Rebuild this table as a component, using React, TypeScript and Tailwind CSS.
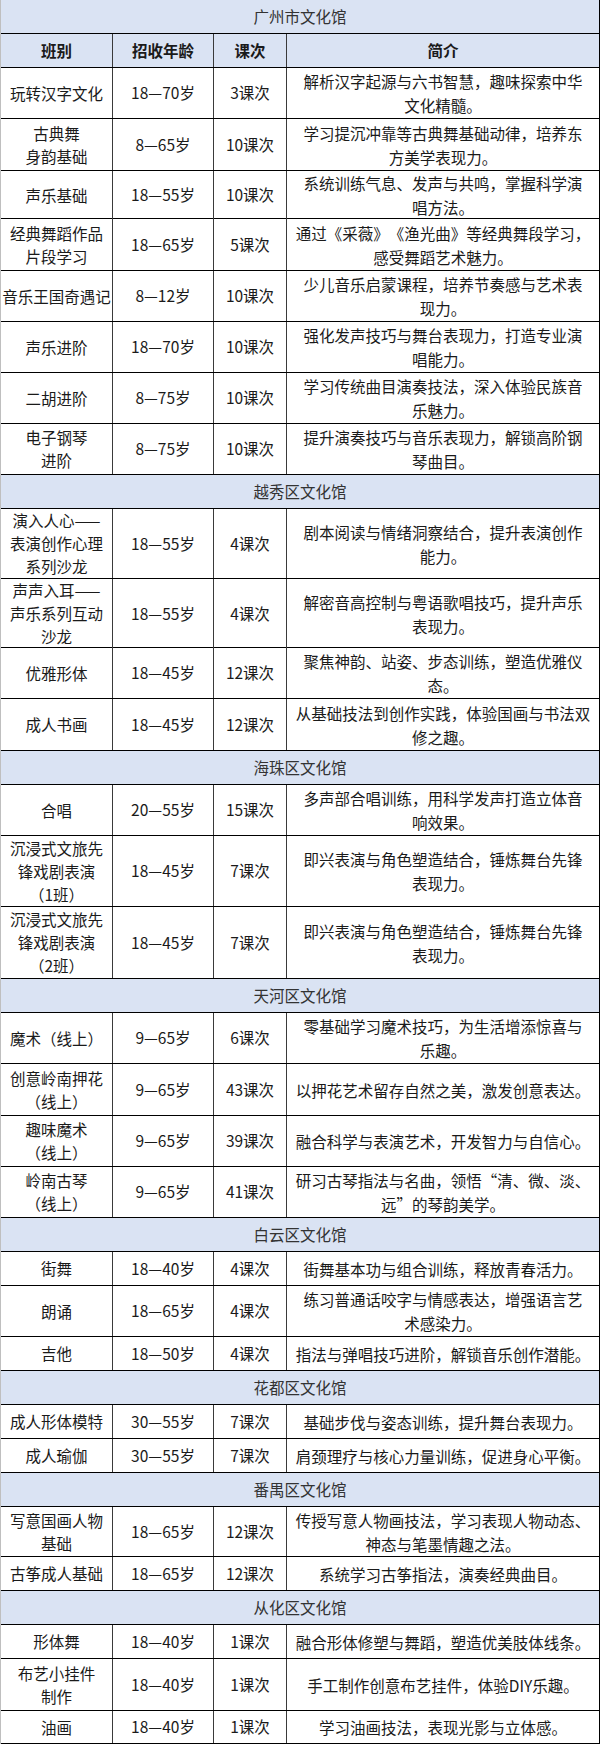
type Course = {
  name: string[];
  age: string;
  count: string;
  intro: string[];
  h: string;
};

type Section = {
  title: string;
  rows: Course[];
};

const drama = ['沉浸式文旅先', '锋戏剧表演'];

const sections: Section[] = [
  {
    title: '广州市文化馆',
    rows: [
      { name: ['玩转汉字文化'], age: '18—70岁', count: '3课次', intro: ['解析汉字起源与六书智慧，趣味探索中华', '文化精髓。'], h: 'h-[51px]' },
      { name: ['古典舞', '身韵基础'], age: '8—65岁', count: '10课次', intro: ['学习提沉冲靠等古典舞基础动律，培养东', '方美学表现力。'], h: 'h-[52px]' },
      { name: ['声乐基础'], age: '18—55岁', count: '10课次', intro: ['系统训练气息、发声与共鸣，掌握科学演', '唱方法。'], h: 'h-[48px]' },
      { name: ['经典舞蹈作品', '片段学习'], age: '18—65岁', count: '5课次', intro: ['通过《采薇》《渔光曲》等经典舞段学习，', '感受舞蹈艺术魅力。'], h: 'h-[52px]' },
      { name: ['音乐王国奇遇记'], age: '8—12岁', count: '10课次', intro: ['少儿音乐启蒙课程，培养节奏感与艺术表', '现力。'], h: 'h-[51px]' },
      { name: ['声乐进阶'], age: '18—70岁', count: '10课次', intro: ['强化发声技巧与舞台表现力，打造专业演', '唱能力。'], h: 'h-[51px]' },
      { name: ['二胡进阶'], age: '8—75岁', count: '10课次', intro: ['学习传统曲目演奏技法，深入体验民族音', '乐魅力。'], h: 'h-[51px]' },
      { name: ['电子钢琴', '进阶'], age: '8—75岁', count: '10课次', intro: ['提升演奏技巧与音乐表现力，解锁高阶钢', '琴曲目。'], h: 'h-[51px]' },
    ],
  },
  {
    title: '越秀区文化馆',
    rows: [
      { name: ['演入人心——', '表演创作心理', '系列沙龙'], age: '18—55岁', count: '4课次', intro: ['剧本阅读与情绪洞察结合，提升表演创作', '能力。'], h: 'h-[70px]' },
      { name: ['声声入耳——', '声乐系列互动', '沙龙'], age: '18—55岁', count: '4课次', intro: ['解密音高控制与粤语歌唱技巧，提升声乐', '表现力。'], h: 'h-[69px]' },
      { name: ['优雅形体'], age: '18—45岁', count: '12课次', intro: ['聚焦神韵、站姿、步态训练，塑造优雅仪', '态。'], h: 'h-[51px]' },
      { name: ['成人书画'], age: '18—45岁', count: '12课次', intro: ['从基础技法到创作实践，体验国画与书法双', '修之趣。'], h: 'h-[52px]' },
    ],
  },
  {
    title: '海珠区文化馆',
    rows: [
      { name: ['合唱'], age: '20—55岁', count: '15课次', intro: ['多声部合唱训练，用科学发声打造立体音', '响效果。'], h: 'h-[51px]' },
      { name: [...drama, '（1班）'], age: '18—45岁', count: '7课次', intro: ['即兴表演与角色塑造结合，锤炼舞台先锋', '表现力。'], h: 'h-[71px]' },
      { name: [...drama, '（2班）'], age: '18—45岁', count: '7课次', intro: ['即兴表演与角色塑造结合，锤炼舞台先锋', '表现力。'], h: 'h-[72px]' },
    ],
  },
  {
    title: '天河区文化馆',
    rows: [
      { name: ['魔术（线上）'], age: '9—65岁', count: '6课次', intro: ['零基础学习魔术技巧，为生活增添惊喜与', '乐趣。'], h: 'h-[51px]' },
      { name: ['创意岭南押花', '（线上）'], age: '9—65岁', count: '43课次', intro: ['以押花艺术留存自然之美，激发创意表达。'], h: 'h-[52px]' },
      { name: ['趣味魔术', '（线上）'], age: '9—65岁', count: '39课次', intro: ['融合科学与表演艺术，开发智力与自信心。'], h: 'h-[51px]' },
      { name: ['岭南古琴', '（线上）'], age: '9—65岁', count: '41课次', intro: ['研习古琴指法与名曲，领悟“清、微、淡、', '远”的琴韵美学。'], h: 'h-[51px]' },
    ],
  },
  {
    title: '白云区文化馆',
    rows: [
      { name: ['街舞'], age: '18—40岁', count: '4课次', intro: ['街舞基本功与组合训练，释放青春活力。'], h: 'h-[34px]' },
      { name: ['朗诵'], age: '18—65岁', count: '4课次', intro: ['练习普通话咬字与情感表达，增强语言艺', '术感染力。'], h: 'h-[51px]' },
      { name: ['吉他'], age: '18—50岁', count: '4课次', intro: ['指法与弹唱技巧进阶，解锁音乐创作潜能。'], h: 'h-[34px]' },
    ],
  },
  {
    title: '花都区文化馆',
    rows: [
      { name: ['成人形体模特'], age: '30—55岁', count: '7课次', intro: ['基础步伐与姿态训练，提升舞台表现力。'], h: 'h-[34px]' },
      { name: ['成人瑜伽'], age: '30—55岁', count: '7课次', intro: ['肩颈理疗与核心力量训练，促进身心平衡。'], h: 'h-[34px]' },
    ],
  },
  {
    title: '番禺区文化馆',
    rows: [
      { name: ['写意国画人物', '基础'], age: '18—65岁', count: '12课次', intro: ['传授写意人物画技法，学习表现人物动态、', '神态与笔墨情趣之法。'], h: 'h-[50px]' },
      { name: ['古筝成人基础'], age: '18—65岁', count: '12课次', intro: ['系统学习古筝指法，演奏经典曲目。'], h: 'h-[34px]' },
    ],
  },
  {
    title: '从化区文化馆',
    rows: [
      { name: ['形体舞'], age: '18—40岁', count: '1课次', intro: ['融合形体修塑与舞蹈，塑造优美肢体线条。'], h: 'h-[34px]' },
      { name: ['布艺小挂件', '制作'], age: '18—40岁', count: '1课次', intro: ['手工制作创意布艺挂件，体验DIY乐趣。'], h: 'h-[52px]' },
      { name: ['油画'], age: '18—40岁', count: '1课次', intro: ['学习油画技法，表现光影与立体感。'], h: 'h-[33px]' },
    ],
  },
];

const cell = 'flex flex-col items-center justify-center text-center border-r border-[#3a3a3a]';

function Lines({ lines }: { lines: string[] }) {
  return (
    <>
      {lines.map((l) => (
        <span key={l} className="block">
          {l}
        </span>
      ))}
    </>
  );
}

function Row({ row }: { row: Course }) {
  return (
    <div className={`grid grid-cols-[112px_101px_73px_1fr] border-b border-black ${row.h}`}>
      <div className={`${cell} leading-[23px]`}>
        <Lines lines={row.name} />
      </div>
      <div className={cell}>{row.age}</div>
      <div className={cell}>{row.count}</div>
      <div className="flex flex-col items-center justify-center text-center leading-[24px]">
        <Lines lines={row.intro} />
      </div>
    </div>
  );
}

export default function App() {
  return (
    <div
      className="w-[600px] bg-white text-[15.5px] text-[#1a1a1a] [text-spacing-trim:space-all] border-l border-r border-l-[#bfbfbf] border-r-black"
      style={{ fontFamily: '"Noto Sans CJK SC", "Noto Sans", sans-serif' }}
    >
      {sections.map((s, i) => (
        <div key={s.title}>
          <div className="flex h-[34px] items-center justify-center border-b border-black bg-[#dae3f3] text-[#333]">
            {s.title}
          </div>
          {i === 0 && (
            <div className="grid h-[34px] grid-cols-[112px_101px_73px_1fr] border-b border-black bg-[#dae3f3] font-bold">
              <div className={cell}>班别</div>
              <div className={cell}>招收年龄</div>
              <div className={cell}>课次</div>
              <div className="flex items-center justify-center">简介</div>
            </div>
          )}
          {s.rows.map((r, j) => (
            <Row key={j} row={r} />
          ))}
        </div>
      ))}
    </div>
  );
}
